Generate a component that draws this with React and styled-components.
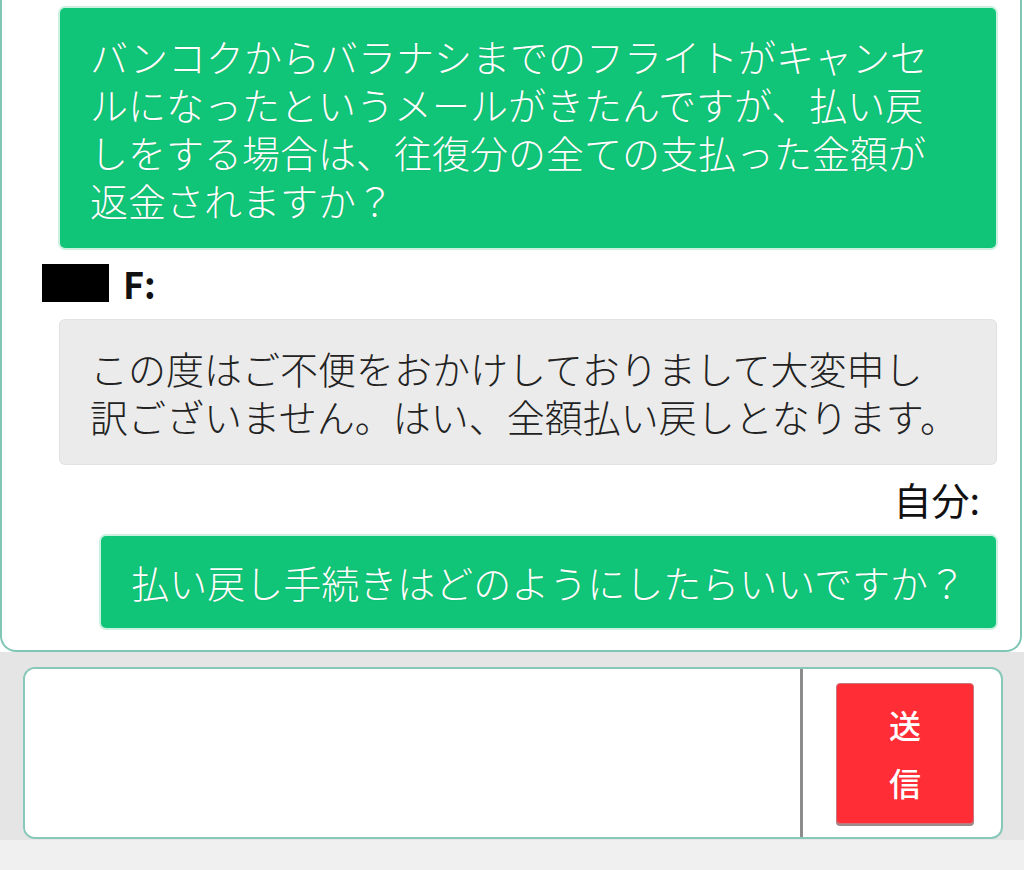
import styled, { createGlobalStyle } from "styled-components";

const messages = [
  {
    from: "me",
    lines: [
      "バンコクからバラナシまでのフライトがキャンセ",
      "ルになったというメールがきたんですが、払い戻",
      "しをする場合は、往復分の全ての支払った金額が",
      "返金されますか？",
    ],
  },
  {
    from: "them",
    label: "F:",
    lines: [
      "この度はご不便をおかけしておりまして大変申し",
      "訳ございません。はい、全額払い戻しとなります。",
    ],
  },
  {
    from: "me",
    label: "自分:",
    lines: ["払い戻し手続きはどのようにしたらいいですか？"],
  },
];

export default function App() {
  return (
    <>
      <GlobalStyle />
      <Page>
        <ChatPanel>
          {messages.map((msg, i) => (
            <MessageGroup key={i}>
              {msg.label && (
                <SenderLabel $mine={msg.from === "me"}>
                  {msg.from === "them" && <Redacted />}
                  <span>{msg.label}</span>
                </SenderLabel>
              )}
              <Bubble $mine={msg.from === "me"} $wide={msg.lines.length > 1}>
                {msg.lines.map((line, j) => (
                  <span key={j}>
                    {line}
                    {j < msg.lines.length - 1 && <br />}
                  </span>
                ))}
              </Bubble>
            </MessageGroup>
          ))}
        </ChatPanel>
        <Composer>
          <InputBox>
            <TextField aria-label="メッセージ" />
            <SendArea>
              <SendButton type="button">
                送<br />信
              </SendButton>
            </SendArea>
          </InputBox>
        </Composer>
        <BottomStrip />
      </Page>
    </>
  );
}

const GlobalStyle = createGlobalStyle`
  html, body {
    margin: 0;
    padding: 0;
    background: #ffffff;
  }
  body {
    font-family: "Noto Sans CJK JP", "Noto Sans", sans-serif;
  }
  * {
    box-sizing: border-box;
  }
`;

const Page = styled.div`
  width: 1024px;
  height: 870px;
  display: flex;
  flex-direction: column;
  overflow: hidden;
`;

const ChatPanel = styled.div`
  width: 1022px;
  display: flex;
  flex-direction: column;
  padding: 8px 24px 22px 40px;
  background: #fff;
  border: 2px solid #80c6b6;
  border-top: none;
  border-radius: 0 0 16px 16px;
`;

const MessageGroup = styled.div`
  display: flex;
  flex-direction: column;
`;

const SenderLabel = styled.div`
  display: flex;
  align-items: center;
  gap: 14px;
  align-self: ${(p) => (p.$mine ? "flex-end" : "flex-start")};
  margin: 11px ${(p) => (p.$mine ? "16px" : "0")} 13px 0;
  height: 48px;
  font-size: ${(p) => (p.$mine ? "38px" : "36px")};
  font-weight: ${(p) => (p.$mine ? 400 : 600)};
  color: #111;
  line-height: 48px;
`;

const Redacted = styled.div`
  width: 67px;
  height: 38px;
  background: #000;
`;

const Bubble = styled.div`
  align-self: ${(p) => (p.$wide ? "stretch" : p.$mine ? "flex-end" : "flex-start")};
  margin-left: 18px;
  padding: ${(p) => (p.$wide ? "24px" : "22px")} 30px;
  border-radius: 5px;
  font-size: 38px;
  font-weight: 300;
  line-height: 48px;
  white-space: nowrap;
  color: ${(p) => (p.$mine ? "#ffffff" : "#222222")};
  background: ${(p) => (p.$mine ? "#10c577" : "#ebebeb")};
  box-shadow: ${(p) =>
    p.$mine ? "0 0 0 2px #cdf1e1" : "0 0 0 1px #e2e2e2"};
  text-shadow: ${(p) => (p.$mine ? "0 0 1px rgba(0, 80, 40, 0.35)" : "none")};
`;

const Composer = styled.div`
  background: #e5e5e5;
  padding: 15px 21px 1px 23px;
`;

const InputBox = styled.div`
  display: flex;
  height: 172px;
  background: #fff;
  border: 2px solid #88c8ba;
  border-radius: 12px;
  overflow: hidden;
`;

const TextField = styled.textarea`
  flex: 1;
  border: none;
  border-right: 3px solid #8c8c8c;
  resize: none;
  outline: none;
  background: #fff;
  font-family: inherit;
  font-size: 32px;
`;

const SendArea = styled.div`
  width: 198px;
  display: flex;
  align-items: center;
  padding: 0 27px 0 33px;
`;

const SendButton = styled.button`
  width: 138px;
  height: 141px;
  border: 1px solid #c8777b;
  border-radius: 4px;
  background: #ff2e36;
  box-shadow: 0 2px 0 #9c8a8b;
  color: #fff;
  font-family: inherit;
  font-size: 32px;
  font-weight: 500;
  line-height: 58px;
  padding: 0;
`;

const BottomStrip = styled.div`
  flex: 1;
  background: #f0f0f0;
`;
